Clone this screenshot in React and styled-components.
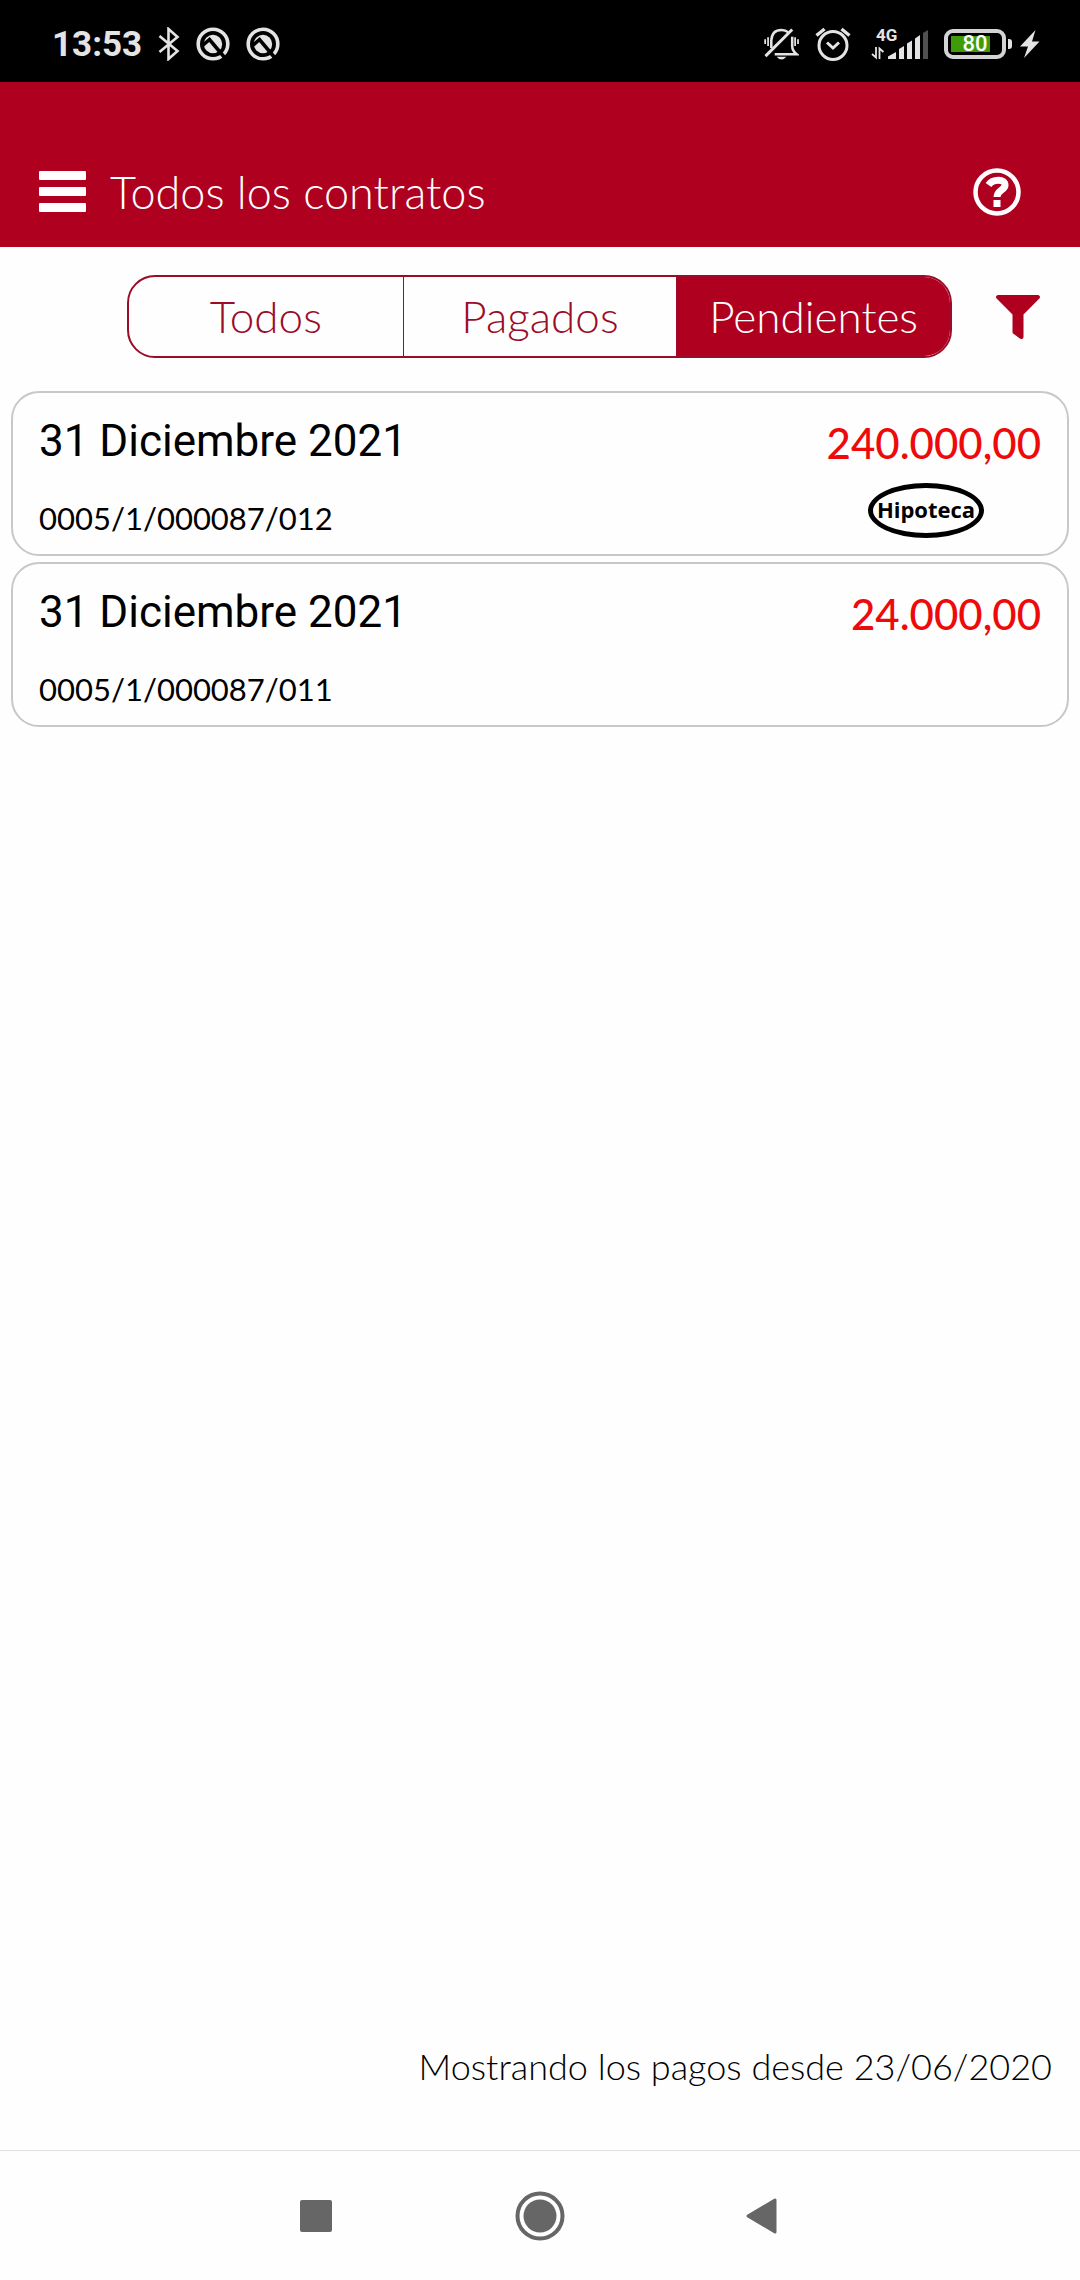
import { useState } from "react";
import styled, { createGlobalStyle } from "styled-components";
import { FaFilter } from "react-icons/fa";

const GlobalStyle = createGlobalStyle`
    *, *::before, *::after {
        box-sizing: border-box;
    }
    body {
        margin: 0;
        background-color: #fefefe;
        color: #000;
        font-family: Lato, "Liberation Sans", sans-serif;
    }
    button {
        margin: 0;
        padding: 0;
        border: 0;
        background: none;
        color: inherit;
        font: inherit;
        cursor: pointer;
    }
    svg {
        display: block;
    }
`

const Screen = styled.div`
    min-height: 100vh;
    display: flex;
    flex-direction: column;
`

const StatusBar = styled.div`
    height: 82px;
    padding: 6px 40px 0 52px;
    display: flex;
    justify-content: space-between;
    align-items: center;
    background-color: #000;
    color: #e4e4e4;
    font-family: Roboto, sans-serif;
`

const StatusGroup = styled.div`
    display: flex;
    align-items: center;
    gap: ${({ $gap }) => $gap}px;
`

const Clock = styled.time`
    padding-top: 2px;
    font-size: 35px;
    line-height: 44px;
    font-weight: 700;
`

const Header = styled.header`
    height: 165px;
    padding: 54px 59px 0 39px;
    display: flex;
    align-items: center;
    gap: 24px;
    background-color: #b00020;
    color: #fff;
`

const Title = styled.h1`
    flex: 1;
    margin: 0;
    font-size: 45px;
    line-height: 52px;
    font-weight: 300;
`

const Toolbar = styled.div`
    padding: 28px 40px 0 127px;
    display: flex;
    align-items: center;
    gap: 44px;
    color: #b00020;
`

const Segments = styled.div`
    flex: 1;
    height: 83px;
    display: grid;
    grid-template-columns: repeat(3, 1fr);
    border: 2px solid #9b0c28;
    border-radius: 28px;
    overflow: hidden;
`

const Segment = styled.button`
    padding-bottom: 2px;
    color: ${({ $active }) => ($active ? "#fff" : "#9b0c28")};
    background-color: ${({ $active }) => ($active ? "#b00020" : "transparent")};
    font-size: 44px;
    line-height: 48px;
    font-weight: 300;
    & + & {
        border-left: 1px solid #9b0c28;
    }
`

const List = styled.ul`
    flex: 1;
    margin: 0;
    padding: 33px 11px 0;
    display: flex;
    flex-direction: column;
    gap: 6px;
    list-style: none;
`

const Card = styled.li`
    min-height: 165px;
    padding: 22px 26px 16px;
    display: flex;
    justify-content: space-between;
    border: 2px solid #c8c8c8;
    border-radius: 28px;
`

const Details = styled.div`
    display: flex;
    flex-direction: column;
    gap: 31px;
`

const DueDate = styled.time`
    font-family: Roboto, sans-serif;
    font-size: 44px;
    line-height: 52px;
`

const Contract = styled.span`
    font-size: 31px;
    line-height: 40px;
`

const Summary = styled.div`
    display: flex;
    flex-direction: column;
    align-items: flex-end;
    gap: 12px;
`

const Amount = styled.span`
    color: #ee0a0a;
    font-size: 42px;
    line-height: 56px;
    font-weight: 500;
`

const Tag = styled.span`
    width: 116px;
    height: 55px;
    margin-right: 57px;
    padding-bottom: 4px;
    display: flex;
    justify-content: center;
    align-items: center;
    border: 5px solid #000;
    border-radius: 50%;
    font-family: "Open Sans", sans-serif;
    font-size: 22px;
    line-height: 24px;
    font-weight: 700;
`

const Since = styled.p`
    margin: 0;
    padding: 0 28px 62px;
    text-align: right;
    font-size: 36px;
    line-height: 44px;
    font-weight: 300;
`

const NavBar = styled.nav`
    height: 130px;
    display: flex;
    justify-content: center;
    align-items: center;
    gap: 174px;
    border-top: 1px solid #e0e0e0;
    color: #666;
`

const NavButton = styled.button`
    width: 50px;
    height: 50px;
    display: grid;
    place-items: center;
`

const BluetoothIcon = () => (
    <svg width="22" height="34" viewBox="0 0 22 34" fill="none" stroke="currentColor" strokeWidth="2.6">
        <path d="M1.500 9 L19.500 24 L10.500 32 V2 L19.500 10 L1.500 25" />
    </svg>
)

const NearbyIcon = () => (
    <svg width="34" height="34" viewBox="0 0 34 34" fill="none">
        <circle cx="17" cy="17" r="14.800" stroke="currentColor" strokeWidth="3.600" />
        <circle cx="17" cy="17" r="9.200" fill="currentColor" />
        <path d="M6 19 L13.500 12.500 L29 31" stroke="#000" strokeWidth="3.600" />
    </svg>
)

const MutedBellIcon = () => (
    <svg width="35" height="34" viewBox="0 0 36 34" fill="none" stroke="currentColor" strokeWidth="2.600">
        <path d="M7.500 21 V13 C8 6 12 2.500 18 2.500 C21 2.500 23 3.200 25 5" />
        <path d="M29 9.500 V19 C29 23 30.500 25 33.500 27.500 H11" />
        <path d="M1.500 29.500 L29 2" strokeWidth="3" />
        <path d="M1.200 12 V17 M4.200 10 V19 M32 10 V19 M35 12 V17" strokeWidth="1.800" />
        <path d="M13 30 H23 Q18 36 13 30 Z" fill="currentColor" stroke="none" />
    </svg>
)

const AlarmIcon = () => (
    <svg width="36" height="34" viewBox="0 0 36 34" fill="none" stroke="currentColor" strokeWidth="3">
        <circle cx="18" cy="18.500" r="14" />
        <path d="M12 15.500 L18 21 L24 15.500" />
        <path d="M1.500 8.500 L9.500 2 M26.500 2 L34.500 8.500" strokeWidth="3.400" />
    </svg>
)

const SignalBars = styled.div`
    display: grid;
    grid-template-columns: 14px 40px;
    column-gap: 3px;
    align-items: end;
`

const Network = styled.span`
    grid-area: 1 / 1 / 2 / 3;
    align-self: start;
    padding-left: 5px;
    font-size: 17px;
    line-height: 14px;
    font-weight: 700;
`

const TransferIcon = styled.svg`
    grid-area: 1 / 1 / 2 / 2;
`

const BarsIcon = styled.svg`
    grid-area: 1 / 2 / 2 / 3;
`

const Signal = () => (
    <SignalBars>
        <Network>4G</Network>
        <TransferIcon width="14" height="14" viewBox="0 0 14 14" fill="none" stroke="currentColor" strokeWidth="1.800">
            <path d="M5 1 V11.500 L1 8 M8.500 13 V2.500 L12.500 6" />
        </TransferIcon>
        <BarsIcon width="40" height="32" viewBox="0 0 40 32" fill="currentColor">
            <path d="M0 31 V28.500 L8 24 V31 Z M11 31 V21 L16 18 V31 Z M19 31 V15.500 L24 12.500 V31 Z M27 31 V10.500 L32 7 V31 Z" />
            <path d="M35 31 V5 L40 2 V31 Z" fill="#505050" />
        </BarsIcon>
    </SignalBars>
)

const BatteryBox = styled.div`
    display: flex;
    align-items: center;
    gap: 2px;
    &::after {
        content: "";
        width: 4px;
        height: 10px;
        border-radius: 0 3px 3px 0;
        background-color: currentColor;
    }
`

const BatteryLevel = styled.div`
    width: 62px;
    height: 30px;
    display: grid;
    place-items: center;
    border: 4px solid #d4d4d4;
    border-radius: 9px;
    background: linear-gradient(#3f9c08, #3f9c08) 3px 3px / 39px 16px no-repeat;
    color: #fff;
    font-size: 22px;
    line-height: 22px;
    font-weight: 500;
`

const BoltIcon = () => (
    <svg width="20" height="30" viewBox="0 0 20 30" fill="currentColor">
        <path d="M15.500 1 L0 17.500 H8 L4 29 L19.500 12.500 H12 Z" />
    </svg>
)

const MenuIcon = () => (
    <svg width="47" height="41" viewBox="0 0 47 41" fill="currentColor">
        <rect y="0" width="47" height="9" rx="1" />
        <rect y="16" width="47" height="9" rx="1" />
        <rect y="32" width="47" height="9" rx="1" />
    </svg>
)

const HelpIcon = () => (
    <svg width="48" height="48" viewBox="0 0 48 48" fill="none" stroke="currentColor">
        <circle cx="24" cy="24" r="21.500" strokeWidth="4.500" />
        <path d="M15.500 17 C20 10.500 32.500 10.500 32 17.500 C31.500 22 24 22.500 24 29" strokeWidth="7" />
        <rect x="20.500" y="32" width="7" height="7" fill="currentColor" stroke="none" />
    </svg>
)

const filters = ["Todos", "Pagados", "Pendientes"];

const payments = [
    { date: "31 Diciembre 2021", contract: "0005/1/000087/012", amount: "240.000,00", tag: "Hipoteca" },
    { date: "31 Diciembre 2021", contract: "0005/1/000087/011", amount: "24.000,00" },
];

const App = () => {

    const [filter, setFilter] = useState("Pendientes");

    return (
        <Screen>
            <GlobalStyle />
            <StatusBar>
                <StatusGroup $gap={16}>
                    <Clock>13:53</Clock>
                    <BluetoothIcon />
                    <NearbyIcon />
                    <NearbyIcon />
                </StatusGroup>
                <StatusGroup $gap={20}>
                    <StatusGroup $gap={16}>
                        <MutedBellIcon />
                        <AlarmIcon />
                    </StatusGroup>
                    <StatusGroup $gap={16}>
                        <Signal />
                        <StatusGroup $gap={8}>
                            <BatteryBox>
                                <BatteryLevel>80</BatteryLevel>
                            </BatteryBox>
                            <BoltIcon />
                        </StatusGroup>
                    </StatusGroup>
                </StatusGroup>
            </StatusBar>
            <Header>
                <button aria-label="Menú"><MenuIcon /></button>
                <Title>Todos los contratos</Title>
                <button aria-label="Ayuda"><HelpIcon /></button>
            </Header>
            <Toolbar>
                <Segments>
                    {filters.map((name) => (
                        <Segment
                            key={name}
                            $active={name === filter}
                            aria-pressed={name === filter}
                            onClick={() => setFilter(name)}
                        >
                            {name}
                        </Segment>
                    ))}
                </Segments>
                <button aria-label="Filtrar"><FaFilter size={44} /></button>
            </Toolbar>
            <List>
                {payments.map(({ date, contract, amount, tag }) => (
                    <Card key={contract}>
                        <Details>
                            <DueDate>{date}</DueDate>
                            <Contract>{contract}</Contract>
                        </Details>
                        <Summary>
                            <Amount>{amount}</Amount>
                            {tag && <Tag>{tag}</Tag>}
                        </Summary>
                    </Card>
                ))}
            </List>
            <Since>Mostrando los pagos desde 23/06/2020</Since>
            <NavBar>
                <NavButton aria-label="Recientes">
                    <svg width="32" height="32" viewBox="0 0 32 32" fill="currentColor">
                        <rect width="32" height="32" rx="2" />
                    </svg>
                </NavButton>
                <NavButton aria-label="Inicio">
                    <svg width="50" height="50" viewBox="0 0 50 50" fill="currentColor">
                        <circle cx="25" cy="25" r="22.500" fill="none" stroke="currentColor" strokeWidth="4" />
                        <circle cx="25" cy="25" r="16.500" />
                    </svg>
                </NavButton>
                <NavButton aria-label="Atrás">
                    <svg width="36" height="36" viewBox="0 0 36 36" fill="currentColor" stroke="currentColor" strokeWidth="3" strokeLinejoin="round">
                        <path d="M2 18 L29 2 V34 Z" />
                    </svg>
                </NavButton>
            </NavBar>
        </Screen>
    );
}

export default App;
